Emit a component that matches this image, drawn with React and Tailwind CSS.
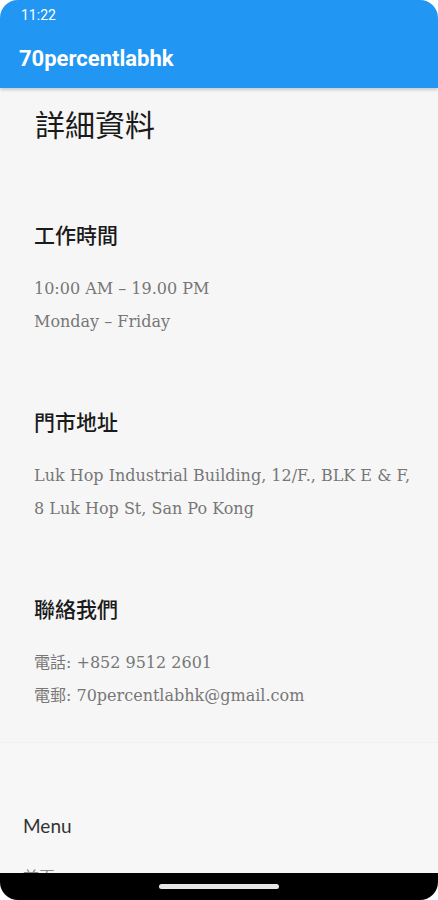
import React from 'react'

const serif = { fontFamily: '"DejaVu Serif", "Noto Sans CJK TC", serif' }

const Section = ({ title, lines, last }) => (
  <div className={last ? '' : 'mb-[68px]'}>
    <h3 className="text-[21px] leading-[30px] font-medium text-[#1b1b1b]">{title}</h3>
    <div className="mt-[23px] text-[16px] leading-[33px] text-[#777]" style={serif}>
      {lines.map((l) => (
        <p key={l} className="whitespace-nowrap">{l}</p>
      ))}
    </div>
  </div>
)

export default function App() {
  return (
    <div className="h-[900px] w-[438px] bg-white overflow-hidden">
      <div
        className="h-full flex flex-col rounded-t-[18px] overflow-hidden"
        style={{ fontFamily: '"Noto Sans CJK TC", Roboto, sans-serif' }}
      >
        {/* шапка */}
        <header className="bg-[#2196f3] h-[88px] shrink-0 text-white shadow-[0_2px_3px_rgba(0,0,0,0.18)] relative z-10">
          <div className="h-[30px] flex items-center pl-[21px] text-[14px]" style={{ fontFamily: 'Roboto, sans-serif' }}>
            11:22
          </div>
          <div className="h-[58px] flex items-center pl-[19px] pb-[2px]">
            <h1 className="text-[22px] font-bold" style={{ fontFamily: 'Roboto, sans-serif' }}>70percentlabhk</h1>
          </div>
        </header>

        <main className="flex-1 overflow-hidden bg-[#f6f6f6]">
          <div className="pl-[34px] pt-[17px] pb-[30px]">
            <h2 className="text-[30px] leading-[36px] text-[#1a1a1a] mb-[78px] pl-[1px]">詳細資料</h2>
            <Section title="工作時間" lines={['10:00 AM – 19.00 PM', 'Monday – Friday']} />
            <Section
              title="門市地址"
              lines={['Luk Hop Industrial Building, 12/F., BLK E & F,', '8 Luk Hop St, San Po Kong']}
            />
            <Section last title="聯絡我們" lines={['電話: +852 9512 2601', '電郵: 70percentlabhk@gmail.com']} />
          </div>

          {/* меню внизу */}
          <div className="bg-[#f7f7f7] border-t border-[#f0f0f0] pl-[23px] pt-[71px]" style={{ fontFamily: 'Lato, sans-serif' }}>
            <div className="text-[19px] leading-[24px] text-[#333]">Menu</div>
            <div className="mt-[26px] text-[16px] text-[#888]" style={{ fontFamily: '"Noto Sans CJK TC", sans-serif' }}>首頁</div>
          </div>
        </main>

        <div className="h-[27px] shrink-0 bg-black rounded-b-[18px] flex justify-center pt-[11px]">
          <div className="w-[120px] h-[5px] rounded-full bg-[#e6e6e6]" />
        </div>
      </div>
    </div>
  )
}
